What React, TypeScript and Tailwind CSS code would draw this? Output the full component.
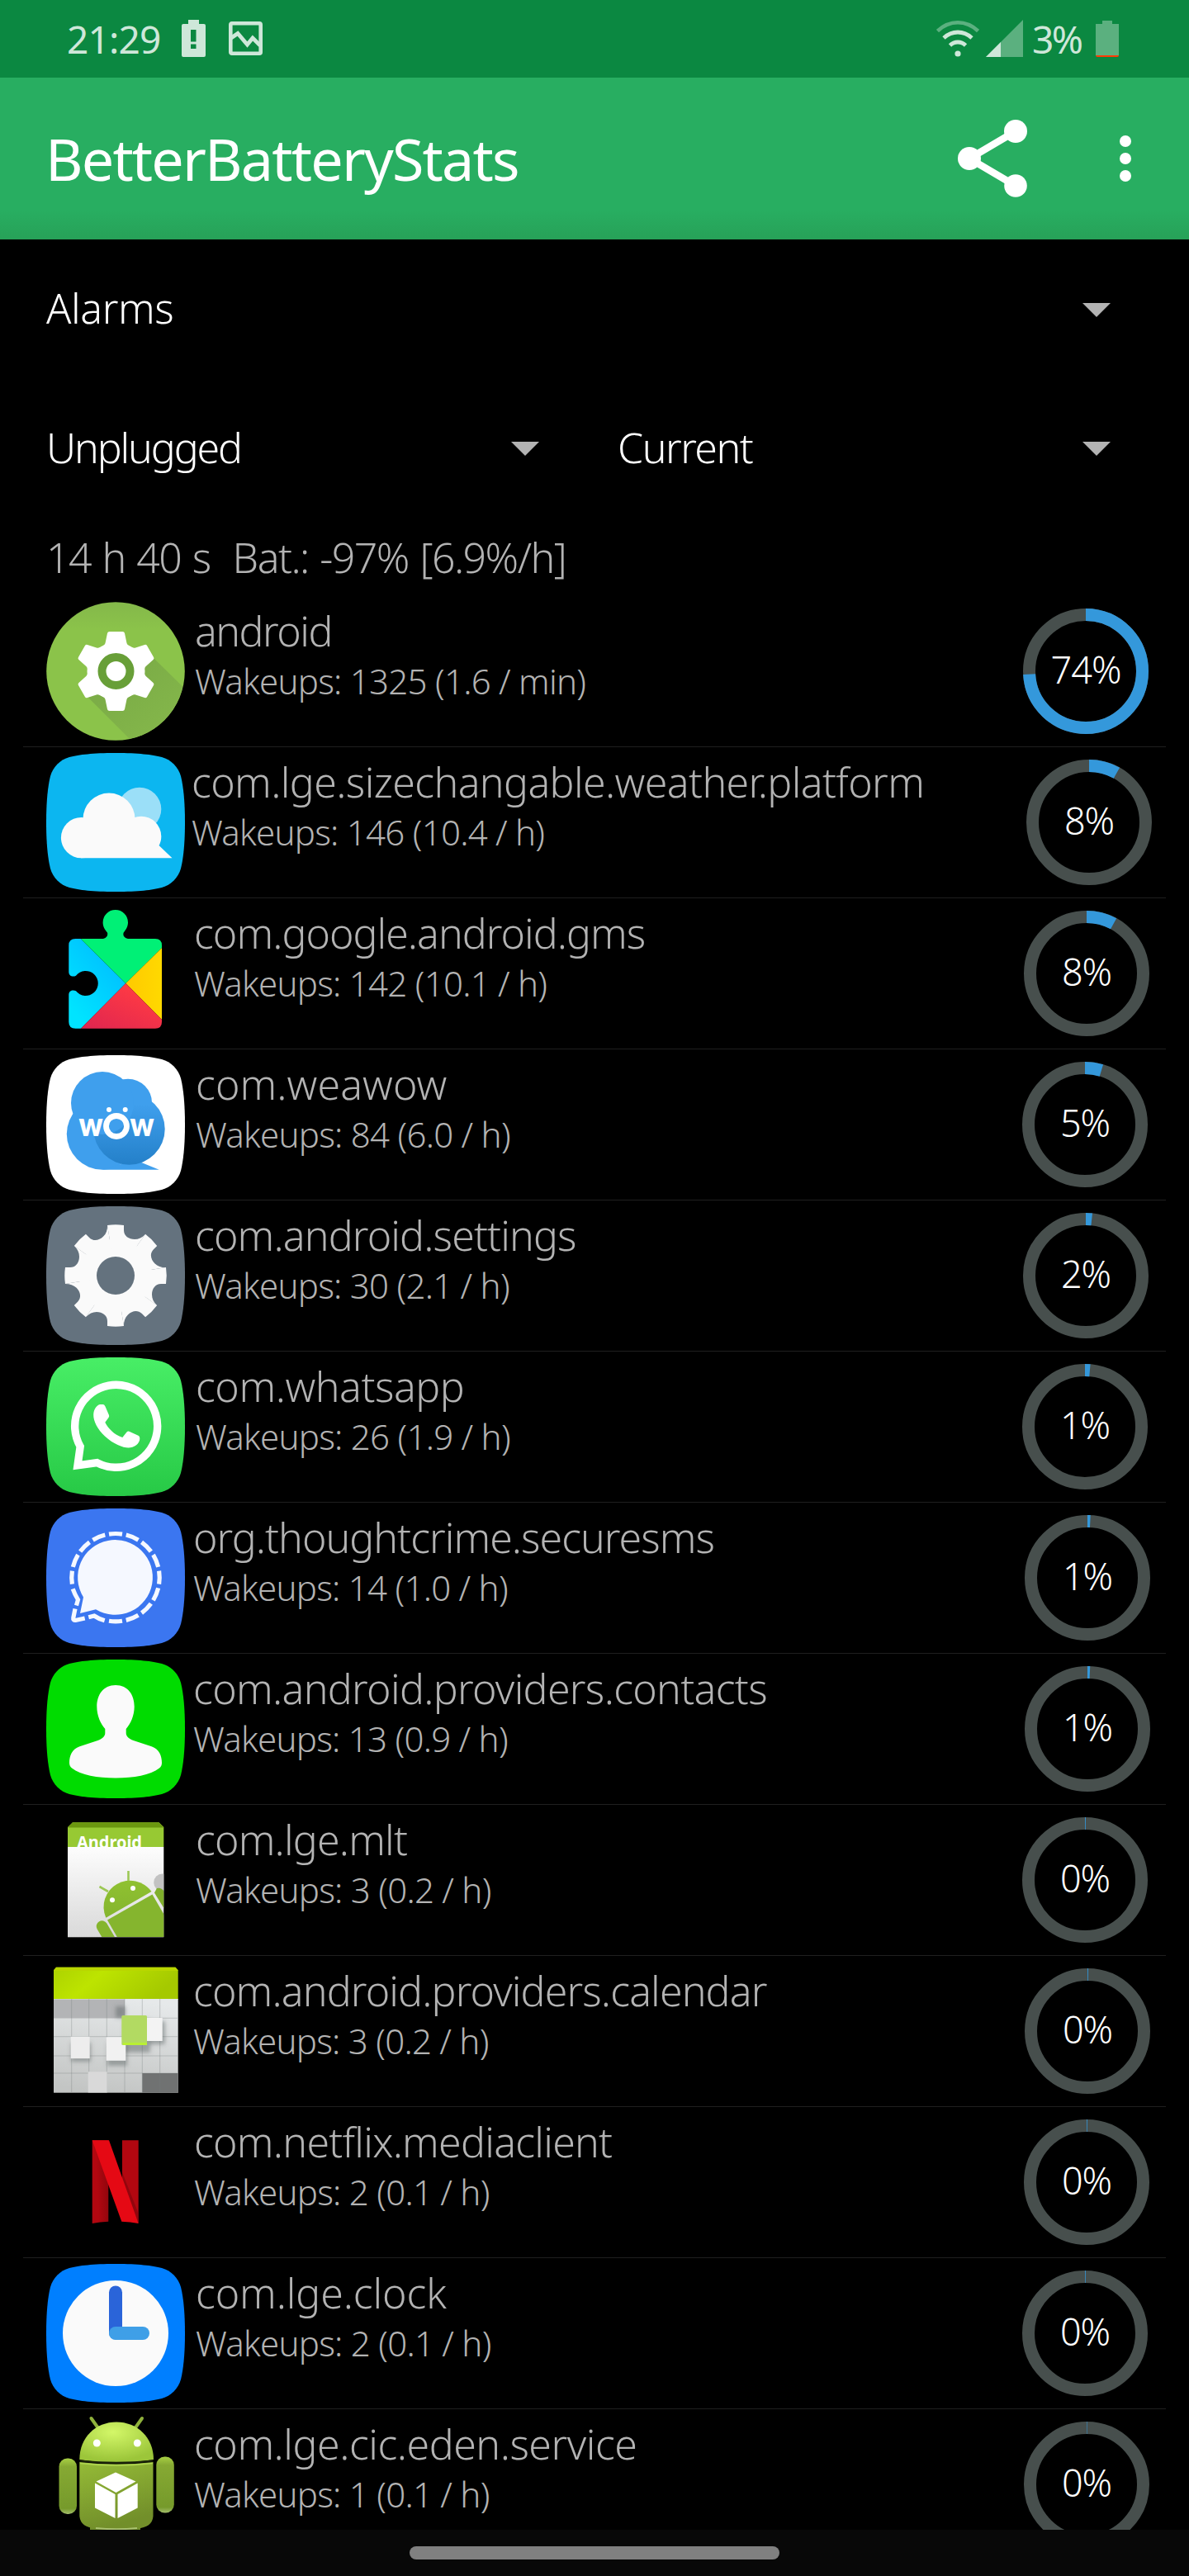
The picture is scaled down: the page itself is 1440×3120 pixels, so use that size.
import type { ReactNode } from "react";

const SQUIRCLE =
  "M84 0C112 0 128 2 140 5C151 8 160 17 163 28C166 40 168 58 168 84C168 110 166 128 163 140C160 151 151 160 140 163C128 166 112 168 84 168C56 168 40 166 28 163C17 160 8 151 5 140C2 128 0 110 0 84C0 58 2 40 5 28C8 17 17 8 28 5C40 2 56 0 84 0Z";

function Icon({ children }: { children: ReactNode }) {
  return (
    <svg viewBox="0 0 168 168" className="block size-[168px] shrink-0">
      {children}
    </svg>
  );
}

function AndroidIcon() {
  return (
    <Icon>
      <defs>
        <clipPath id="android-clip">
          <circle cx="84" cy="84" r="83.5" />
        </clipPath>
        <linearGradient id="android-bg" x1="0" y1="0" x2="0" y2="1">
          <stop offset="0" stopColor="#84b84a" />
          <stop offset="0.2" stopColor="#8bc34a" />
        </linearGradient>
        <linearGradient id="android-shadow" x1="0.3" y1="0.3" x2="0.9" y2="0.9">
          <stop offset="0" stopColor="#7cad47" />
          <stop offset="1" stopColor="#86b94b" />
        </linearGradient>
      </defs>
      <circle cx="84" cy="84" r="83.8" fill="url(#android-bg)" />
      <path d="M49 114L110 175H180V117L130 68Z" fill="url(#android-shadow)" clipPath="url(#android-clip)" />
      <g transform="translate(84.5 84)" fill="#fff">
        <circle r="35" />
        {[0, 60, 120, 180, 240, 300].map((a) => (
          <path
            key={a}
            transform={`rotate(${a})`}
            d="M-8 -48H8Q10 -48 10.500 -46L13 -34Q14 -31 19 -29L0 -16L-19 -29Q-14 -31 -13 -34L-10.500 -46Q-10 -48 -8 -48Z"
          />
        ))}
        <circle r="17" fill="none" stroke="#689f38" strokeWidth="10" />
      </g>
    </Icon>
  );
}

function WeatherIcon() {
  return (
    <Icon>
      <path d={SQUIRCLE} fill="#0cb6f0" />
      <circle cx="113" cy="68" r="26.300" fill="#9bdff8" />
      <g fill="#fafafa">
        <circle cx="76" cy="80" r="31.500" />
        <circle cx="42.600" cy="102.600" r="24.700" />
        <circle cx="115" cy="101" r="24.300" />
        <path d="M42 127.300V90H125L139 104L136 111.500L152.500 127.300Z" />
      </g>
    </Icon>
  );
}

function PlayServicesIcon() {
  return (
    <Icon>
      <defs>
        <linearGradient id="gms-blue" x1="0.8" y1="0.1" x2="0.2" y2="0.9">
          <stop offset="0" stopColor="#00bdff" />
          <stop offset="1" stopColor="#00e4ff" />
        </linearGradient>
        <linearGradient id="gms-red" x1="0.8" y1="0.2" x2="0.1" y2="1">
          <stop offset="0" stopColor="#ff3a44" />
          <stop offset="1" stopColor="#e0264f" />
        </linearGradient>
        <linearGradient id="gms-yellow" x1="0" y1="0" x2="1" y2="0">
          <stop offset="0" stopColor="#ffc900" />
          <stop offset="1" stopColor="#ffd900" />
        </linearGradient>
        <clipPath id="gms-clip">
          <path d="M35.500 42H69C73 41 75 38 74 34.500C71 31 68.600 27.500 68.600 22.300A15.200 15.200 0 0 1 99 22.300C99 27.500 96.500 31 93.700 34.500C92.500 38 94.500 41 99 42H132Q140 42 140 50V142.700Q140 150.700 132 150.700H35.500Q27.300 150.700 27.300 142.700V110C27.300 104 33 103.500 36 105.300A15 15 0 1 0 36 86.700C33 88.500 27.300 88 27.300 82V50Q27.300 42 35.500 42Z" />
        </clipPath>
      </defs>
      <g clipPath="url(#gms-clip)">
        <path d="M27 42H41.700L96.300 96L41.700 151H27Z" fill="url(#gms-blue)" />
        <path d="M41.700 42L68 0H110L140 30V53L96.300 96Z" fill="#00f076" />
        <path d="M140 53L96.300 96L140 140Z" fill="url(#gms-yellow)" />
        <path d="M140 140L96.300 96L41.700 151H140Z" fill="url(#gms-red)" />
      </g>
    </Icon>
  );
}

function WeawowIcon() {
  return (
    <Icon>
      <defs>
        <linearGradient id="wow-drop" x1="0" y1="0" x2="0" y2="1">
          <stop offset="0.15" stopColor="#3f9fed" />
          <stop offset="1" stopColor="#2480c9" />
        </linearGradient>
      </defs>
      <path d={SQUIRCLE} fill="#fff" />
      <g fill="#3f9fed">
        <circle cx="99" cy="57.700" r="29" />
        <circle cx="68" cy="95.500" r="43.200" />
        <path d="M67 138.700H136.700L108 127Z" />
      </g>
      <circle cx="100.500" cy="89.500" r="43.200" fill="url(#wow-drop)" />
      <circle cx="68" cy="58" r="38" fill="#3f9fed" />
      <g fill="#fff">
        <circle cx="76" cy="66" r="3" />
        <circle cx="95.700" cy="66" r="3" />
        <circle cx="85" cy="86" r="12.500" fill="none" stroke="#fff" strokeWidth="6.800" />
        <text x="39.500" y="98" fontSize="39" fontWeight="800" fontFamily="Lato, sans-serif" textLength="29" lengthAdjust="spacingAndGlyphs">
          w
        </text>
        <text x="101.500" y="98" fontSize="39" fontWeight="800" fontFamily="Lato, sans-serif" textLength="29" lengthAdjust="spacingAndGlyphs">
          w
        </text>
      </g>
    </Icon>
  );
}

function SettingsIcon() {
  return (
    <Icon>
      <path d={SQUIRCLE} fill="#64727e" />
      <g transform="translate(84 84)" fill="#fafafa">
        <circle r="44" />
        {[0, 45, 90, 135, 180, 225, 270, 315].map((a) => (
          <path
            key={a}
            transform={`rotate(${a})`}
            d="M0 0L-10 -61Q0 -62.500 10 -61V-55C10 -48 16 -44 23 -44C28 -44 32 -46 36 -50Z"
          />
        ))}
        <circle r="23" fill="#64727e" />
      </g>
    </Icon>
  );
}

function WhatsappIcon() {
  return (
    <Icon>
      <defs>
        <linearGradient id="wa-bg" x1="0" y1="0" x2="0" y2="1">
          <stop offset="0" stopColor="#48ee66" />
          <stop offset="1" stopColor="#27c946" />
        </linearGradient>
      </defs>
      <path d={SQUIRCLE} fill="url(#wa-bg)" />
      <path d="M61.500 127.600A50 50 0 1 0 41.200 108L38 130.800Z" fill="none" stroke="#fff" strokeWidth="9.400" />
      <path
        d="M65 57H69Q70.500 57 71.500 59.500L76 70Q76.600 71.500 75.500 73L71.300 78.700C75 86 82 93.500 92.300 97L97.500 90.500Q98.700 89 100.500 89.700L112 95Q113.500 96 113.300 98.700C113 105 106 109.500 99.500 109.500C93 109.500 81 105 71 95.500C62 87 57 77 57.200 69.500C57.300 63 61 58 65 57Z"
        fill="#fff"
      />
    </Icon>
  );
}

function SignalIcon() {
  const dashes = [0, 22.5, 45, 67.5, 90, 112.5, 135, 157.5, 180, 270, 292.5, 315, 337.5];
  return (
    <Icon>
      <path d={SQUIRCLE} fill="#3b76f0" />
      <path d="M60 122.300A45.400 45.400 0 1 0 45 107.500L41 127Z" fill="#f5f8ff" />
      <g fill="none" stroke="#f5f8ff" strokeWidth="5.200">
        {dashes.map((a) => (
          <path key={a} transform={`rotate(${a} 84 83.700)`} d="M76 31.100A53.200 53.200 0 0 1 92 31.100" />
        ))}
        <path d="M70.700 135.800Q63 133.500 58 130L51.300 131.700" />
        <path d="M46.700 133L35.500 135.500Q32.300 135.700 32.800 132.500L35 121.500" />
        <path d="M36.500 117.500L38.500 110.500Q34.500 104 32.200 97.300" />
      </g>
    </Icon>
  );
}

function ContactsIcon() {
  return (
    <Icon>
      <path d={SQUIRCLE} fill="#00dc00" />
      <path
        d="M84 31C99 31 106.700 43 106.700 57C106.700 68 102 78 96.700 84V89C96.700 93 100 96 105.500 98L127.500 105.300C137 108.500 140 117 140 125Q140 129 137 131.500C126 140 106 143.500 84 143.500C62 143.500 42 140 31 131.500Q28 129 28 125C28 117 31 108.500 40.500 105.300L62.500 98C68 96 71.300 93 71.300 89V84C66 78 61.300 68 61.300 57C61.300 43 69 31 84 31Z"
        fill="#fafafa"
      />
    </Icon>
  );
}

function MltIcon() {
  return (
    <Icon>
      <defs>
        <linearGradient id="mlt-paper" x1="0" y1="0" x2="0" y2="1">
          <stop offset="0" stopColor="#fdfdfd" />
          <stop offset="1" stopColor="#d9d9d9" />
        </linearGradient>
        <linearGradient id="mlt-bot" x1="0" y1="0" x2="0" y2="1">
          <stop offset="0" stopColor="#8fc131" />
          <stop offset="1" stopColor="#85b52e" />
        </linearGradient>
        <clipPath id="mlt-band">
          <rect x="26" y="14" width="116.300" height="30" />
        </clipPath>
        <clipPath id="mlt-page">
          <rect x="26" y="44" width="116.300" height="109" />
        </clipPath>
      </defs>
      <path d="M26 20L32 14.300H136.500L142.300 20V44H26Z" fill="#97c933" />
      <path d="M26 20.500L32 14.300H136.500L142.300 20.500Z" fill="#6b970f" />
      <rect x="26" y="44" width="116.300" height="109.300" fill="url(#mlt-paper)" />
      <text
        x="37"
        y="45.500"
        fontSize="21"
        fontWeight="700"
        fill="#fff"
        fontFamily="'Noto Sans', sans-serif"
        textLength="79"
        lengthAdjust="spacingAndGlyphs"
        clipPath="url(#mlt-band)"
      >
        Android
      </text>
      <g clipPath="url(#mlt-page)">
        <circle cx="140.700" cy="87" r="10.500" fill="#c2c2c2" />
        <path d="M72.300 129.700A32 32 0 0 1 127.500 98Z" fill="url(#mlt-bot)" />
        <path d="M74 132.500L128.500 101.500L160 156H87.500Z" fill="#85b52e" />
        <path d="M131 99.500L134 94Q140 92 146 102V124Z" fill="#7fae2b" />
        <path d="M67.500 140L78 158" stroke="#85b52e" strokeWidth="13.500" strokeLinecap="round" />
        <path d="M99.500 85V73M75 98L64.500 92" stroke="#9cc855" strokeWidth="2.600" />
        <circle cx="80" cy="108.300" r="3" fill="#fff" />
        <circle cx="105" cy="94" r="3" fill="#fff" />
      </g>
    </Icon>
  );
}

function CalendarIcon() {
  return (
    <Icon>
      <defs>
        <linearGradient id="cal-top" x1="0" y1="0" x2="1" y2="0.3">
          <stop offset="0" stopColor="#acd200" />
          <stop offset="0.4" stopColor="#bde400" />
          <stop offset="1" stopColor="#a5c900" />
        </linearGradient>
        <linearGradient id="cal-grid" x1="0.6" y1="0" x2="0.4" y2="1">
          <stop offset="0" stopColor="#e6e9ea" />
          <stop offset="1" stopColor="#c3c5c4" />
        </linearGradient>
        <filter id="cal-blur" x="-30%" y="-30%" width="160%" height="160%">
          <feGaussianBlur stdDeviation="2.500" />
        </filter>
      </defs>
      <path d="M9 10L12 6.700H156.500L159.700 10V46H9Z" fill="url(#cal-top)" />
      <path d="M9 11L12 6.700H156.500L159.700 11Z" fill="#b9d600" />
      <rect x="9" y="45" width="150.700" height="113.700" fill="url(#cal-grid)" />
      <rect x="9" y="45.500" width="86" height="23" fill="#b3b4b6" />
      <rect x="116.300" y="135" width="43.400" height="23.700" fill="#707272" />
      <path
        d="M30.700 45V158M51.700 45V158M73.300 45V158M95 45V158M116.300 45V158M137.700 45V158M9 90.700H159M9 114H159M9 135H159M95 68.300H159"
        stroke="#7c8080"
        strokeOpacity="0.35"
        strokeWidth="1"
      />
      <g fill="#555a5a" fillOpacity="0.45" filter="url(#cal-blur)">
        <rect x="30" y="98" width="24" height="23" />
        <rect x="74" y="98" width="24" height="28" />
        <rect x="94" y="70" width="32" height="40" />
        <rect x="124" y="72" width="20" height="28" />
        <rect x="84" y="54" width="12" height="14" />
      </g>
      <rect x="29.700" y="90.700" width="23" height="26.500" fill="#ededed" />
      <rect x="72.700" y="91.300" width="23.600" height="28.500" fill="#f1f1f1" />
      <rect x="50.700" y="133.300" width="23" height="25.200" fill="#d9d9d9" />
      <rect x="121.700" y="68" width="19" height="28" fill="#f3f3f3" />
      <rect x="91.300" y="65" width="30.700" height="36" rx="1.500" fill="#b2da62" />
      <path d="M93 99.500H122" stroke="#b9f033" strokeWidth="3" />
    </Icon>
  );
}

function NetflixIcon() {
  return (
    <Icon>
      <defs>
        <linearGradient id="nf-left" x1="0" y1="0.6" x2="1" y2="0.4">
          <stop offset="0.3" stopColor="#b20710" />
          <stop offset="1" stopColor="#8f060d" />
        </linearGradient>
      </defs>
      <path d="M55.700 33.200H75.300V131.700Q65 132.300 55.700 133.900Z" fill="url(#nf-left)" />
      <path d="M92 33.200H111.700V133.900L92 85Z" fill="#b20710" />
      <path d="M92 72L111.700 122V133.900L92 90Z" fill="#7d050b" fillOpacity="0.6" />
      <path d="M55.700 33.200H76L111.700 133.900Q102 132.300 91.300 131.700Z" fill="#e50914" />
    </Icon>
  );
}

function ClockIcon() {
  return (
    <Icon>
      <path d={SQUIRCLE} fill="#007fff" />
      <circle cx="84" cy="84" r="64" fill="#fafafa" />
      <rect x="76" y="26.500" width="16" height="65" rx="8" fill="#2a64d9" />
      <rect x="76" y="76" width="49" height="16" rx="8" fill="#3f9fe7" />
    </Icon>
  );
}

function ServiceIcon() {
  return (
    <Icon>
      <defs>
        <radialGradient id="svc-head" cx="0.45" cy="0.25" r="0.7">
          <stop offset="0" stopColor="#d3f768" />
          <stop offset="1" stopColor="#9cc63a" />
        </radialGradient>
        <linearGradient id="svc-body" x1="0" y1="0" x2="0.3" y2="1">
          <stop offset="0" stopColor="#95bb37" />
          <stop offset="1" stopColor="#728f2a" />
        </linearGradient>
        <linearGradient id="svc-arm" x1="0" y1="0" x2="0" y2="1">
          <stop offset="0" stopColor="#a8d044" />
          <stop offset="0.15" stopColor="#86a933" />
          <stop offset="0.9" stopColor="#769a2b" />
          <stop offset="1" stopColor="#a3bd6c" />
        </linearGradient>
      </defs>
      <path d="M54.500 4L63 16M116 4L107.500 16" stroke="#8fb13c" strokeWidth="4" strokeLinecap="round" />
      <path d="M40.300 54C40.300 27 60 8.500 85 8.500C110 8.500 130 27 130 54Q108 57.500 85 57.500Q62 57.500 40.300 54Z" fill="url(#svc-head)" />
      <rect x="15.500" y="52.500" width="21.500" height="67.500" rx="10" fill="url(#svc-arm)" />
      <rect x="133.300" y="50.500" width="21.500" height="68" rx="10" fill="url(#svc-arm)" />
      <rect x="53" y="130" width="61" height="30" fill="#6f8d2a" />
      <path d="M40.300 57Q85 62 129.500 57V122Q129 136 110 137.500H60Q41 136 40.300 122Z" fill="url(#svc-body)" />
      <path d="M40.500 55.500Q85 60 129.500 55.500" fill="none" stroke="#1d260a" strokeWidth="2" />
      <path d="M41 58.500Q85 63.500 129 58.500" fill="none" stroke="#b0d650" strokeWidth="1.500" />
      <path d="M60 137Q85 139.500 110 137" fill="none" stroke="#a9c070" strokeWidth="2" />
      <circle cx="61.300" cy="34" r="4.500" fill="#fff" />
      <circle cx="110.300" cy="34" r="4.500" fill="#fff" />
      <path
        d="M84 69.500L108.500 80.500L84.500 94L60.500 80.500ZM59 82.500L83.500 96V125L59 112.500ZM110.700 82.500L86.500 96V125L110.700 112.500Z"
        fill="#fff"
      />
    </Icon>
  );
}

function Ring({ percent, arc }: { percent: number; arc: number }) {
  const r = 68.5;
  const length = 2 * Math.PI * r;
  return (
    <div className="relative size-[152px] shrink-0">
      <svg viewBox="0 0 152 152" className="block size-full -rotate-90">
        <circle cx="76" cy="76" r={r} fill="none" stroke="#474f4d" strokeWidth="15" />
        <circle
          cx="76"
          cy="76"
          r={r}
          fill="none"
          stroke="#3498db"
          strokeWidth="15"
          strokeDasharray={`${(arc / 100) * length} ${length}`}
        />
      </svg>
      <span className="absolute inset-0 flex items-center justify-center pb-[4px] text-[45px] tracking-[-1px] text-white">
        {percent}%
      </span>
    </div>
  );
}

type Stat = {
  name: string;
  spacing: number;
  detail: string;
  percent: number;
  arc: number;
  inset: number;
  icon: ReactNode;
};

const stats: Stat[] = [
  { name: "android", spacing: -1.5, detail: "Wakeups: 1325 (1.6 / min)", percent: 74, arc: 74, inset: 12, icon: <AndroidIcon /> },
  { name: "com.lge.sizechangable.weather.platform", spacing: -0.6, detail: "Wakeups: 146 (10.4 / h)", percent: 8, arc: 8.1, inset: 8, icon: <WeatherIcon /> },
  { name: "com.google.android.gms", spacing: -0.95, detail: "Wakeups: 142 (10.1 / h)", percent: 8, arc: 7.9, inset: 11, icon: <PlayServicesIcon /> },
  { name: "com.weawow", spacing: 0.1, detail: "Wakeups: 84 (6.0 / h)", percent: 5, arc: 4.7, inset: 13, icon: <WeawowIcon /> },
  { name: "com.android.settings", spacing: -0.85, detail: "Wakeups: 30 (2.1 / h)", percent: 2, arc: 1.7, inset: 12, icon: <SettingsIcon /> },
  { name: "com.whatsapp", spacing: -0.45, detail: "Wakeups: 26 (1.9 / h)", percent: 1, arc: 1.4, inset: 13, icon: <WhatsappIcon /> },
  { name: "org.thoughtcrime.securesms", spacing: -0.96, detail: "Wakeups: 14 (1.0 / h)", percent: 1, arc: 0.8, inset: 10, icon: <SignalIcon /> },
  { name: "com.android.providers.contacts", spacing: -0.67, detail: "Wakeups: 13 (0.9 / h)", percent: 1, arc: 0.7, inset: 10, icon: <ContactsIcon /> },
  { name: "com.lge.mlt", spacing: -0.8, detail: "Wakeups: 3 (0.2 / h)", percent: 0, arc: 0.2, inset: 13, icon: <MltIcon /> },
  { name: "com.android.providers.calendar", spacing: -0.85, detail: "Wakeups: 3 (0.2 / h)", percent: 0, arc: 0.2, inset: 10, icon: <CalendarIcon /> },
  { name: "com.netflix.mediaclient", spacing: -0.72, detail: "Wakeups: 2 (0.1 / h)", percent: 0, arc: 0.18, inset: 11, icon: <NetflixIcon /> },
  { name: "com.lge.clock", spacing: -0.1, detail: "Wakeups: 2 (0.1 / h)", percent: 0, arc: 0.18, inset: 13, icon: <ClockIcon /> },
  { name: "com.lge.cic.eden.service", spacing: -0.46, detail: "Wakeups: 1 (0.1 / h)", percent: 0, arc: 0.12, inset: 11, icon: <ServiceIcon /> },
];

function StatRow({ stat }: { stat: Stat }) {
  return (
    <li className="mx-7 flex h-[183px] shrink-0 items-center border-b border-[#1f1f1f] pr-[9px] pl-7">
      {stat.icon}
      <div
        className="flex h-full min-w-0 flex-1 items-center"
        style={{ paddingLeft: stat.inset, paddingRight: stat.inset }}
      >
        <div className="h-full flex-1 pt-[12px] whitespace-nowrap text-[#b3b3b3]">
          <p className="text-[50px] leading-[60px]" style={{ letterSpacing: stat.spacing }}>
            {stat.name}
          </p>
          <p className="mt-[3px] text-[42px] leading-[56px] tracking-[-0.74px]">{stat.detail}</p>
        </div>
        <Ring percent={stat.percent} arc={stat.arc} />
      </div>
    </li>
  );
}

function Spinner({ label, className }: { label: string; className: string }) {
  return (
    <button className="flex flex-1 items-center justify-between text-left text-[50px] leading-[60px] text-white">
      <span className={className}>{label}</span>
      <svg viewBox="0 0 34 17" className="mt-px h-[17px] w-[34px]" fill="#b3b3b3">
        <path d="M0 0H34L17 17Z" />
      </svg>
    </button>
  );
}

function StatusBar() {
  return (
    <div className="flex h-[94px] shrink-0 items-start justify-between bg-[#0b8841] pr-[85px] pl-[81px] text-[46px] leading-[60px] font-normal text-[#cee7d9]">
      <div className="flex">
        <span className="w-[139px] pt-[17px] tracking-[-0.8px]">21:29</span>
        <svg viewBox="0 0 29 45" className="mt-6 h-[45px] w-[29px]" fill="#cee7d9">
          <path
            fillRule="evenodd"
            d="M8 0H21V5H27Q29 5 29 7V43Q29 45 27 45H2Q0 45 0 43V7Q0 5 2 5H8ZM11 12H17.500V26.500H11ZM11 29.500H17.500V35H11Z"
          />
        </svg>
        <svg viewBox="0 0 41 41" className="mt-[26px] ml-7 size-[41px]">
          <rect x="2.300" y="2.300" width="36.400" height="36.400" rx="1.500" fill="none" stroke="#cee7d9" strokeWidth="4.600" />
          <path d="M3 20L11 14.500L22.500 28L29 20L38 29" fill="none" stroke="#cee7d9" strokeWidth="4.800" />
        </svg>
      </div>
      <div className="flex">
        <svg viewBox="0 0 52 45" className="mt-6 h-[45px] w-[52px]" fill="none" stroke="#cee7d9" strokeWidth="4.800">
          <path d="M1.500 13.500Q12.500 3.300 26 3.300T50.500 13.500" stroke="#5bb07f" strokeWidth="4.500" />
          <path d="M9 22Q16.500 15 26 15T43 22" />
          <path d="M16.500 31Q20.500 27 26 27T35.500 31" />
          <circle cx="26" cy="41" r="3.600" fill="#cee7d9" stroke="none" />
        </svg>
        <svg viewBox="0 0 45 45" className="mt-6 ml-[8px] size-[45px]">
          <path d="M45 0V45H0Z" fill="#5bb07f" />
          <path d="M18 27V45H0Z" fill="#cee7d9" />
        </svg>
        <span className="ml-[11px] w-[77px] pt-[17px] tracking-[-2.5px]">3%</span>
        <svg viewBox="0 0 28 45" className="mt-6 h-[45px] w-[28px]">
          <path d="M8 1H20V5H28V43H0V5H8Z" fill="#5bb07f" />
          <path d="M0 43H28Q28 45 26 45H2Q0 45 0 43Z" fill="#ff3a05" />
        </svg>
      </div>
    </div>
  );
}

export default function App() {
  return (
    <div className="flex h-[3120px] w-[1440px] flex-col overflow-hidden bg-black font-['Noto_Sans','Open_Sans',sans-serif] font-light">
      <StatusBar />
      <header className="flex h-[196px] shrink-0 items-center bg-[linear-gradient(#28ae61_0_82%,#27a158)] pr-[70px] pl-[55px]">
        <h1 className="flex-1 text-[70px] font-normal tracking-[-1.8px] text-white">BetterBatteryStats</h1>
        <svg viewBox="0 0 84 94" className="h-[94px] w-[84px]" fill="#fff" stroke="#fff">
          <path d="M70 14L14 47L70 80" fill="none" strokeWidth="8.500" />
          <g stroke="none">
            <circle cx="70" cy="14" r="14" />
            <circle cx="14" cy="47" r="14" />
            <circle cx="70" cy="80" r="13.800" />
          </g>
        </svg>
        <svg viewBox="0 0 14 56" className="ml-[112px] h-[56px] w-[14px]" fill="#fff">
          <circle cx="7" cy="7" r="7" />
          <circle cx="7" cy="28" r="7" />
          <circle cx="7" cy="49" r="7" />
        </svg>
      </header>

      <main className="flex min-h-0 flex-1 flex-col overflow-hidden">
        <div className="flex h-[169px] shrink-0 pr-[95px] pl-14">
          <Spinner label="Alarms" className="pb-[3px] tracking-[-0.4px]" />
        </div>
        <div className="flex h-[168px] shrink-0 gap-[95px] pr-[95px] pl-14">
          <Spinner label="Unplugged" className="pb-[3px] tracking-[-2.1px]" />
          <Spinner label="Current" className="pb-[3px] tracking-[-1.5px]" />
        </div>
        <p className="h-[95px] shrink-0 pt-[18px] pl-14 text-[50px] leading-[60px] tracking-[-1.53px] whitespace-pre text-[#b3b3b3] [word-spacing:2px]">
          14 h 40 s  Bat.: -97% [6.9%/h]
        </p>
        <ul className="flex flex-col">
          {stats.map((stat) => (
            <StatRow key={stat.name} stat={stat} />
          ))}
        </ul>
      </main>

      <footer className="flex h-14 shrink-0 items-center justify-center bg-[#080808]">
        <div className="h-4 w-[448px] rounded-full bg-[#808080]" />
      </footer>
    </div>
  );
}
